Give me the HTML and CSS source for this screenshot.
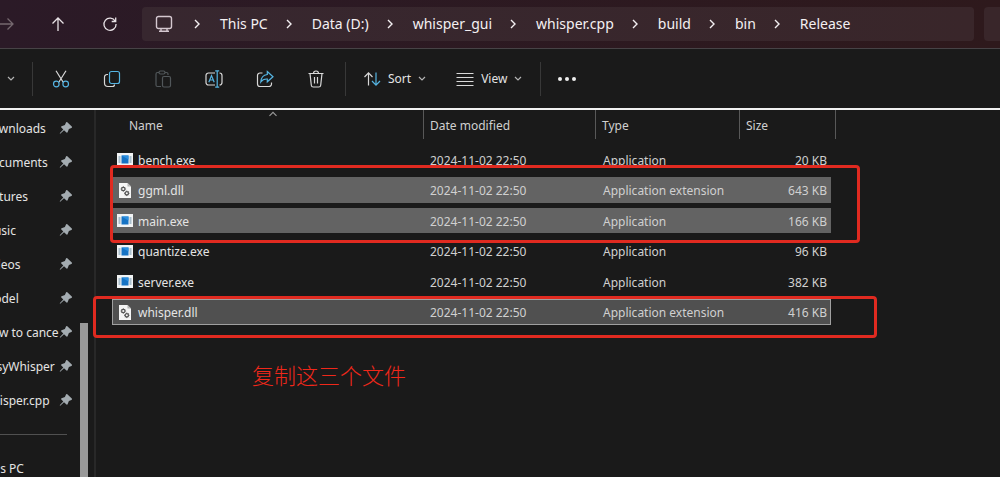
FILE: index.html
```html
<!DOCTYPE html>
<html lang="en">
<head>
<meta charset="utf-8">
<title>Release</title>
<link rel="stylesheet" href="styles.css">
</head>
<body>
<svg class="defs" aria-hidden="true">
  <symbol id="right" viewBox="0 0 6 10"><path d="M1 1l4 4-4 4"/></symbol>
  <symbol id="down" viewBox="0 0 8 6"><path d="M1 1l3 3 3-3"/></symbol>
  <symbol id="pin" viewBox="0 0 14 14"><path d="M8.3 1.2l4.5 4.3c.5.5.2 1.2-.4 1.4L9.9 8 8.600 11.300c-.2.5-.7.6-1.100.2L5 9.200 1.200 12.800l-.5-.5L4.300 8.500 2.300 6.400c-.4-.4-.2-1 .3-1.100L5.900 4.100 7 1.500c.2-.6.8-.8 1.300-.3z"/></symbol>
  <symbol id="exe" viewBox="0 0 16 13"><path fill="#f2f4f5" d="M0 0h16v13H0z"/><path fill="#a9bfcd" d="M1.500 3h2v7h-2zM12.500 3h2v7h-2z"/><path fill="#1673c4" d="M4.500 2.500h7v8h-7z"/><path fill="#2b8fe0" d="M4.500 2.500h7v4z"/></symbol>
  <symbol id="dll" viewBox="0 0 12 15"><path fill="#f5f5f5" d="M0 0h8.500L12 3.500V15H0z"/><path fill="#b5b5b5" d="M8.500 0L12 3.500H8.500z"/><g fill="none" stroke="#555"><circle cx="4.300" cy="6" r="1.700" stroke-width="1.200"/><circle cx="7.800" cy="10.300" r="1.700" stroke-width="1.300"/><path stroke-width=".8" d="M4.300 3.200v1M4.300 7.800v1M1.500 6h1M6.100 6h1M2.400 4.100l.7.7M6.200 4.100l-.7.7M2.400 7.900l.7-.7M7.800 7.500v1M7.800 12.100v1M5 10.300h1M9.600 10.300h1M5.900 12.200l.7-.7M9.700 8.400l-.7.7M9.700 12.200l-.7-.7"/></g></symbol>
</svg>

<header class="topbar">
  <button class="nav dim" aria-label="Forward"><svg viewBox="0 0 16 16"><path d="M1 8h13M8.500 2.500L14 8l-5.500 5.500"/></svg></button>
  <button class="nav" aria-label="Up"><svg viewBox="0 0 16 16"><path d="M8 15V2M2.500 7.500L8 2l5.500 5.500"/></svg></button>
  <button class="nav" aria-label="Refresh"><svg viewBox="0 0 16 16"><path d="M13.300 5.200A6.100 6.100 0 1 0 14.100 8M13.700 1.500v4h-4"/></svg></button>
  <nav class="address" aria-label="Address">
    <svg class="pc" viewBox="0 0 18 18"><rect x="1.500" y="1.500" width="15" height="12" rx="2"/><path d="M6 14v2M12 14v2M4 16.300h10"/></svg>
    <svg class="sep"><use href="#right"/></svg><a href="#">This PC</a>
    <svg class="sep"><use href="#right"/></svg><a href="#">Data (D:)</a>
    <svg class="sep"><use href="#right"/></svg><a href="#">whisper_gui</a>
    <svg class="sep"><use href="#right"/></svg><a href="#">whisper.cpp</a>
    <svg class="sep"><use href="#right"/></svg><a href="#">build</a>
    <svg class="sep"><use href="#right"/></svg><a href="#">bin</a>
    <svg class="sep"><use href="#right"/></svg><a href="#">Release</a>
  </nav>
  <div class="search"></div>
</header>

<div class="toolbar">
  <button class="new" aria-label="New"><svg class="chev"><use href="#down"/></svg></button>
  <span class="rule"></span>
  <div class="tools">
    <button aria-label="Cut"><svg viewBox="0 0 18 18"><path d="M4 .8l7.200 11.400M14 .8L6.800 12.200"/><g class="blue"><circle cx="4.300" cy="14" r="2.800"/><circle cx="13.700" cy="14" r="2.800"/></g></svg></button>
    <button aria-label="Copy"><svg viewBox="0 0 18 18"><path d="M5 4.500H4A2.500 2.500 0 0 0 1.500 7v6A3.500 3.500 0 0 0 5 16.500h4.500a2 2 0 0 0 2-2"/><rect class="blue" x="6.500" y="1.500" width="10" height="12" rx="2"/></svg></button>
    <button class="off" aria-label="Paste" disabled><svg viewBox="0 0 18 18"><path d="M7 16.500H3.500a1.500 1.500 0 0 1-1.500-1.500V4a1.500 1.500 0 0 1 1.500-1.500H5M11 2.500h1.500A1.500 1.500 0 0 1 14 4v1"/><rect x="5" y="1" width="6" height="3" rx="1.500"/><rect x="8.500" y="6.500" width="8" height="10.500" rx="1.500"/></svg></button>
    <button aria-label="Rename"><svg viewBox="0 0 18 18"><path d="M10 3H3.500A2.500 2.500 0 0 0 1 5.500v7A2.500 2.500 0 0 0 3.500 15H10M14.500 3a2.500 2.500 0 0 1 2.500 2.500v7a2.500 2.500 0 0 1-2.500 2.500"/><path class="blue" d="M3.800 12.200L6.500 5.500l2.700 6.700M4.700 10h3.600M12.200 1v16M10.200.8h4M10.200 17.200h4"/></svg></button>
    <button aria-label="Share"><svg viewBox="0 0 18 18"><path d="M6.500 3H4a2.500 2.500 0 0 0-2.500 2.500v8.500A2.500 2.500 0 0 0 4 16.500h9a2.500 2.500 0 0 0 2.500-2.500v-1.500"/><path class="blue" d="M11.300 1.500L17 6.700l-5.700 5.100V9C8.300 8.800 6.300 9.800 4.800 12c.2-4 2.500-7 6.500-7.500z"/></svg></button>
    <button aria-label="Delete"><svg viewBox="0 0 18 18"><path d="M1.500 3.500h15M6.500 3.500a2.500 2.500 0 0 1 5 0M3 3.500l1.300 11.700a2 2 0 0 0 2 1.800h5.400a2 2 0 0 0 2-1.800L15 3.500M7.500 7v6.500M10.500 7v6.500"/></svg></button>
  </div>
  <span class="rule"></span>
  <button class="menu"><svg viewBox="0 0 18 18"><path d="M5.500 15.500V3M1.500 7l4-4.200 4 4.200"/><path class="blue" d="M13 2.500V15M9 11l4 4.200 4-4.200"/></svg>Sort<svg class="chev"><use href="#down"/></svg></button>
  <button class="menu view"><svg viewBox="0 0 18 18"><path d="M.5 3.500h17M.5 7.500h17M.5 11.500h17M.5 15.500h17"/></svg>View<svg class="chev"><use href="#down"/></svg></button>
  <span class="rule"></span>
  <button class="more" aria-label="See more"><svg viewBox="0 0 18 18"><circle cx="2" cy="9" r="2"/><circle cx="9" cy="9" r="2"/><circle cx="16" cy="9" r="2"/></svg></button>
</div>

<main class="body">
  <aside class="side">
    <div class="places">
      <a href="#"><span>Downloads</span><svg><use href="#pin"/></svg></a>
      <a href="#"><span>Documents</span><svg><use href="#pin"/></svg></a>
      <a href="#"><span>Pictures</span><svg><use href="#pin"/></svg></a>
      <a href="#"><span>Music</span><svg><use href="#pin"/></svg></a>
      <a href="#"><span>Videos</span><svg><use href="#pin"/></svg></a>
      <a href="#"><span>model</span><svg><use href="#pin"/></svg></a>
      <a href="#"><span>How to cance</span><svg><use href="#pin"/></svg></a>
      <a href="#"><span>EasyWhisper</span><svg><use href="#pin"/></svg></a>
      <a href="#"><span>whisper.cpp</span><svg><use href="#pin"/></svg></a>
      <hr>
      <a href="#"><span>This PC</span></a>
    </div>
    <div class="track"><div class="thumb"></div></div>
  </aside>
  <section class="files">
    <table>
      <thead>
        <tr><th class="name">Name<svg class="asc" viewBox="0 0 8 6"><path d="M1 5l3-3 3 3"/></svg></th><th>Date modified</th><th>Type</th><th>Size</th></tr>
      </thead>
      <tbody>
        <tr><td><svg class="exe"><use href="#exe"/></svg>bench.exe</td><td>2024-11-02 22:50</td><td>Application</td><td>20 KB</td></tr>
        <tr class="picked"><td><svg class="dll"><use href="#dll"/></svg>ggml.dll</td><td>2024-11-02 22:50</td><td>Application extension</td><td>643 KB</td></tr>
        <tr class="picked"><td><svg class="exe"><use href="#exe"/></svg>main.exe</td><td>2024-11-02 22:50</td><td>Application</td><td>166 KB</td></tr>
        <tr><td><svg class="exe"><use href="#exe"/></svg>quantize.exe</td><td>2024-11-02 22:50</td><td>Application</td><td>96 KB</td></tr>
        <tr><td><svg class="exe"><use href="#exe"/></svg>server.exe</td><td>2024-11-02 22:50</td><td>Application</td><td>382 KB</td></tr>
        <tr class="picked focus"><td><svg class="dll"><use href="#dll"/></svg>whisper.dll</td><td>2024-11-02 22:50</td><td>Application extension</td><td>416 KB</td></tr>
      </tbody>
    </table>
    <p class="note" lang="zh-CN">复制这三个文件</p>
    <div class="mark first"></div>
    <div class="mark second"></div>
  </section>
</main>
</body>
</html>
```
FILE: styles.css
```css
* { box-sizing: border-box; }

body {
  margin: 0;
  height: 100vh;
  display: flex;
  flex-direction: column;
  overflow: hidden;
  background: #1a1a1a;
  color: #e4e4e4;
  font: 12px/16px "Noto Sans", "Open Sans", "Noto Sans CJK SC", sans-serif;
}

.defs { display: none; }
svg { flex: none; fill: none; stroke: currentColor; }
button {
  display: flex;
  align-items: center;
  justify-content: center;
  padding: 0;
  border: 0;
  background: none;
  color: inherit;
  font: inherit;
}
a { color: inherit; text-decoration: none; }

/* navigation row */
.topbar {
  flex: none;
  display: flex;
  align-items: center;
  height: 49px;
  border-bottom: 1px solid #474346;
  background: linear-gradient(90deg, #2b1a27, #2e191c);
}
.nav { width: 52px; height: 32px; color: #e8e2e6; }
.nav.dim { width: 32px; padding-right: 18px; color: #75686f; }
.nav svg { width: 16px; height: 16px; stroke-width: 1.3; }
.address {
  flex: 1;
  display: flex;
  align-items: center;
  height: 34px;
  margin-left: 6px;
  padding-left: 13px;
  border-radius: 4px;
  background: linear-gradient(90deg, #37272f, #39262a);
  color: #f4f0f2;
  font-size: 14px;
}
.pc { width: 18px; height: 18px; margin-right: 3px; color: #d5c8d0; stroke-width: 1.4; }
.sep { width: 6px; height: 10px; margin: 0 20px 0 18px; stroke-width: 1.4; }
.search {
  width: 16px;
  height: 34px;
  margin-left: 10px;
  border-radius: 4px 0 0 4px;
  background: #39262a;
}

/* command row */
.toolbar {
  flex: none;
  display: flex;
  align-items: center;
  height: 61px;
  border-bottom: 2px solid #f2f2f2;
}
.toolbar svg { width: 18px; height: 18px; stroke-width: 1.2; color: #d8d8d8; }
.toolbar .blue { stroke: #55b4e2; }
.toolbar .chev { width: 8px; height: 6px; color: #b4b4b4; }
.new { width: 32px; padding-right: 10px; }
.rule { width: 1px; height: 34px; background: #383838; }
.tools { display: flex; gap: 27px; padding: 0 17px 0 16px; }
.tools button { width: 24px; height: 24px; }
.toolbar .off svg { color: #51575a; }
.menu { gap: 7px; margin-left: 17px; }
.menu.view { margin-left: 30px; margin-right: 18px; }
.more { margin-left: 17px; }
.toolbar .more svg { fill: #eee; stroke: none; }

/* places and file list */
.body { flex: 1; display: flex; min-height: 0; }
.side {
  flex: none;
  display: flex;
  width: 96px;
  overflow: hidden;
  border-right: 2px solid #282828;
}
.places { flex: none; width: 80px; padding-top: 1px; }
.places a { display: flex; align-items: center; height: 34px; }
.places span { width: 76px; margin-left: -17px; padding-top: 2px; white-space: nowrap; }
.places svg { width: 14px; height: 14px; fill: #a3abb0; stroke: none; }
.places hr { width: 67px; height: 1px; margin: 17px 0 16px; border: 0; background: #505050; }
.track { display: flex; flex-direction: column; width: 8px; padding-top: 213px; }
.thumb { flex: 1; background: #999; }

.files { position: relative; flex: 1; padding-left: 16px; }
table { display: block; color: #d0d0d0; }
thead, th, td { display: block; }
tr { display: grid; grid-template-columns: 311px 173px 144px 91px; width: max-content; }
thead tr { grid-template-columns: 312px 172px 144px 96px; }
th {
  position: relative;
  height: 29px;
  padding: 8px 6px 0;
  border-right: 1px solid #585858;
  font-weight: 400;
  text-align: left;
}
th.name { padding-left: 17px; }
.asc { position: absolute; top: 0; left: 50%; width: 10px; height: 7px; color: #999; }
tbody { display: flex; flex-direction: column; gap: 5px; padding-top: 8px; }
tbody tr { height: 25px; align-items: center; }
tbody tr:nth-child(even) { height: 26px; }
td { padding: 2px 0 0 7px; white-space: nowrap; }
td:first-child { display: flex; align-items: center; padding-left: 5px; color: #e4e4e4; }
td:last-child { padding-right: 4px; text-align: right; }
td svg { stroke: none; }
.exe { width: 16px; height: 13px; margin: 0 5px 2px 0; }
.dll { width: 12px; height: 15px; margin: 0 7px 2px 2px; }
.picked { background: #636363; }
.focus { background: #505050; outline: 1px solid #a0a0a0; outline-offset: -1px; }

/* annotations */
.note { margin: 35px 0 0 140px; color: #f0281a; font-size: 22px; font-weight: 300; line-height: 30px; }
.mark { position: absolute; border: 3px solid #e02a20; border-radius: 4px; }
.mark.first { left: 14px; top: 55px; width: 750px; height: 78px; }
.mark.second { left: -3px; top: 186px; width: 784px; height: 42px; }
```
